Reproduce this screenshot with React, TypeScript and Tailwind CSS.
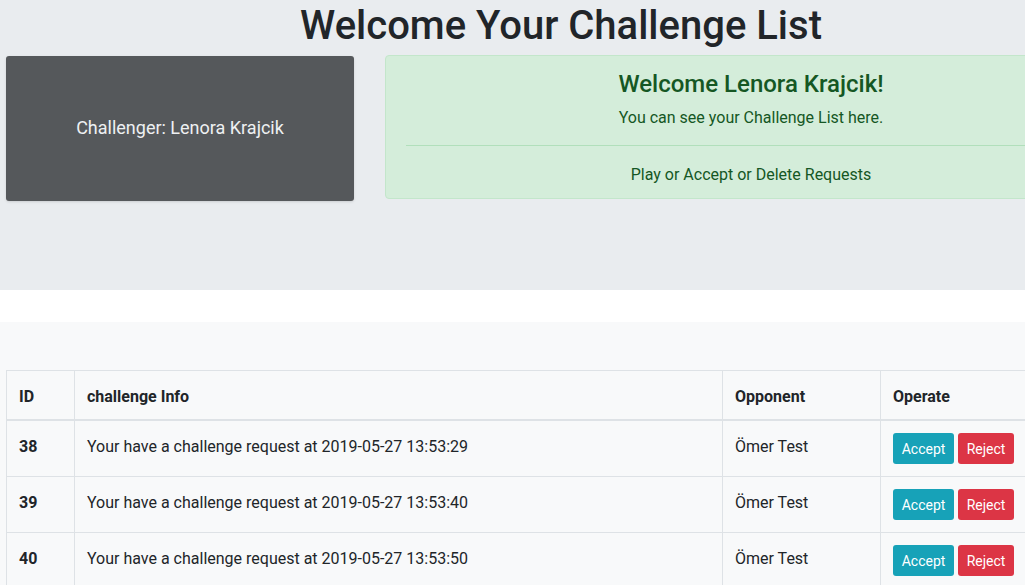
import React from "react";

const rows = [
  { id: 38, time: "2019-05-27 13:53:29" },
  { id: 39, time: "2019-05-27 13:53:40" },
  { id: 40, time: "2019-05-27 13:53:50" },
];

const App = () => {
  return (
    <div
      className="w-[1025px] h-[585px] overflow-hidden bg-[#f8f9fa] text-[#212529]"
      style={{ fontFamily: "Roboto, 'Liberation Sans', sans-serif" }}
    >
      <div className="w-[1122px]">
        {/* jumbotron */}
        <div className="bg-[#e9ecef] h-[290px]">
          <h1 className="text-center text-[40px] leading-[48px] pt-[2px] font-medium mb-[6px]">
            Welcome Your Challenge List
          </h1>
          <div className="flex items-start pl-[6px] gap-[31px]">
            <div className="w-[348px] h-[145px] bg-[#55585b] rounded-[3px] shadow-sm flex items-center justify-center">
              <p className="text-lg text-[#eef0f2] -mt-[2px]">Challenger: Lenora Krajcik</p>
            </div>
            <div className="w-[732px] -mt-px bg-[#d4edda] border border-[#c3e6cb] text-[#155724] rounded px-5 pt-[14px] pb-[10px] text-center">
              <h4 className="text-2xl leading-[29px] font-medium mb-[7px]">Welcome Lenora Krajcik!</h4>
              <p className="text-base leading-6">You can see your Challenge List here.</p>
              <hr className="mt-[15px] mb-4 border-t border-[#b1dfbb]" />
              <p className="text-base leading-6 pt-px pb-px">Play or Accept or Delete Requests</p>
            </div>
          </div>
        </div>
        <div className="h-8 bg-white" />
        {/* table section */}
        <div className="pt-12 pl-[6px]">
          <table className="w-[1116px] border-collapse border border-[#dee2e6] text-base">
            <thead>
              <tr className="text-left">
                <th className="w-[68px] px-3 pt-[14px] pb-[10px] leading-6 font-bold border border-b-2 border-[#dee2e6]">ID</th>
                <th className="w-[648px] px-3 pt-[14px] pb-[10px] leading-6 font-bold border border-b-2 border-[#dee2e6]">challenge Info</th>
                <th className="w-[158px] px-3 pt-[14px] pb-[10px] leading-6 font-bold border border-b-2 border-[#dee2e6]">Opponent</th>
                <th className="px-3 pt-[14px] pb-[10px] leading-6 font-bold border border-b-2 border-[#dee2e6]">Operate</th>
              </tr>
            </thead>
            <tbody>
              {rows.map((r) => (
                <tr key={r.id}>
                  <td className="px-3 pt-[14px] pb-[10px] align-top leading-6 font-bold border border-[#dee2e6]">{r.id}</td>
                  <td className="px-3 pt-[14px] pb-[10px] align-top leading-6 border border-[#dee2e6]">
                    Your have a challenge request at {r.time}
                  </td>
                  <td className="px-3 pt-[14px] pb-[10px] align-top leading-6 border border-[#dee2e6]">Ömer Test</td>
                  <td className="px-3 py-3 align-top border border-[#dee2e6]">
                    <div className="flex gap-1">
                      <button className="w-[61px] h-[31px] text-sm leading-[21px] pt-px text-white bg-[#17a2b8] rounded-[3px]">
                        Accept
                      </button>
                      <button className="w-[56px] h-[31px] text-sm leading-[21px] pt-px text-white bg-[#dc3545] rounded-[3px]">
                        Reject
                      </button>
                    </div>
                  </td>
                </tr>
              ))}
            </tbody>
          </table>
        </div>
      </div>
    </div>
  );
};

export default App;
